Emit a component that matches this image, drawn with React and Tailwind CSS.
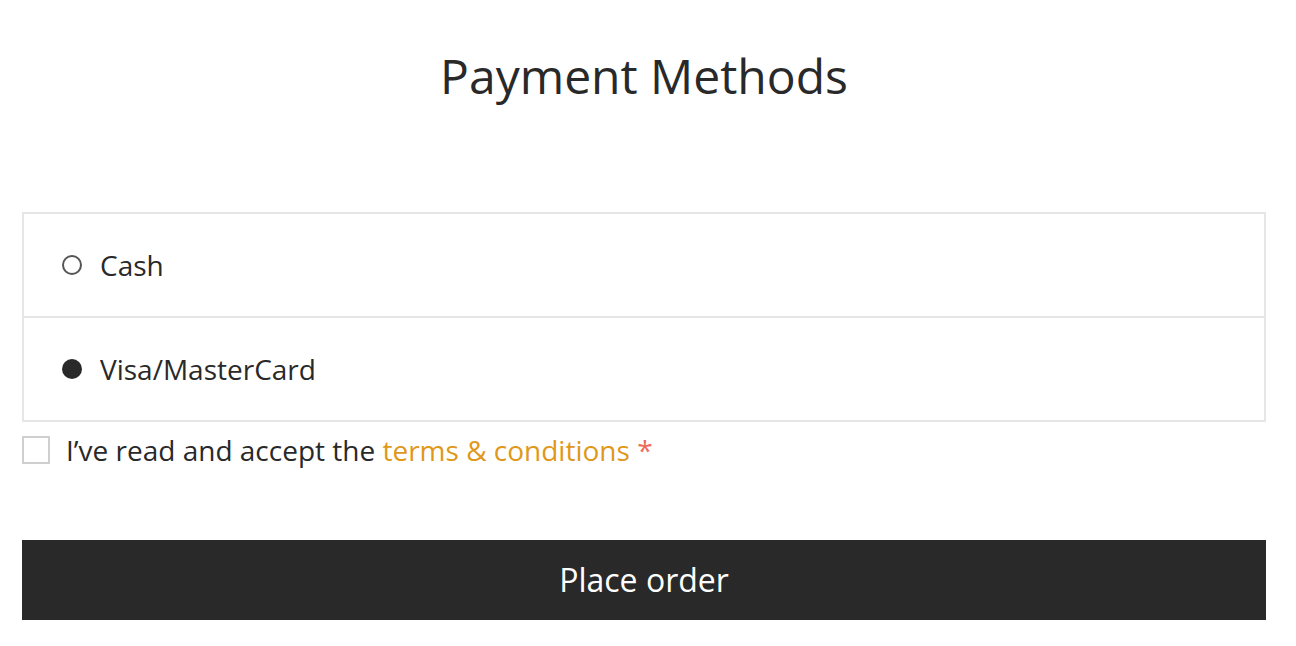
import React, { useState } from 'react';

const methods = ['Cash', 'Visa/MasterCard'];

const App = () => {
  const [selected, setSelected] = useState('Visa/MasterCard');
  const [accepted, setAccepted] = useState(false);

  return (
    <div className="bg-white min-h-screen pl-[22px] pr-[30px] text-[#292929] font-['Open_Sans',sans-serif]">
      <h1 className="pt-[44px] text-center text-[48px] leading-[64px] font-normal">Payment Methods</h1>

      {/* Methods list */}
      <div className="mt-[104px] border-2 border-[#e6e6e6]">
        {methods.map((name, i) => (
          <label
            key={name}
            className={`flex items-center pl-[38px] cursor-pointer ${
              i > 0 ? 'h-[104px] border-t-2 border-[#e6e6e6]' : 'h-[102px]'
            }`}
            onClick={() => setSelected(name)}
          >
            {selected === name ? (
              <span className="w-[20px] h-[20px] rounded-full bg-[#292929]" />
            ) : (
              <span className="w-[20px] h-[20px] rounded-full border-2 border-[#555]" />
            )}
            <span className="ml-[18px] text-[28px] leading-none">{name}</span>
          </label>
        ))}
      </div>

      {/* Terms */}
      <div className="flex items-center mt-[9px]" onClick={() => setAccepted(!accepted)}>
        <span className="w-[28px] h-[28px] border-2 border-[#cfcfcf] bg-white flex items-center justify-center">
          {accepted && <span className="w-[14px] h-[14px] bg-[#292929]" />}
        </span>
        <span className="ml-[16px] text-[28px] leading-[38px]">
          I’ve read and accept the <a href="#" className="text-[#e0981a]">terms &amp; conditions</a>{' '}
          <span className="text-[#ef6a5a]">*</span>
        </span>
      </div>

      <button className="mt-[71px] w-full h-[80px] bg-[#292929] text-white text-[32px]">
        Place order
      </button>
    </div>
  );
};

export default App;
